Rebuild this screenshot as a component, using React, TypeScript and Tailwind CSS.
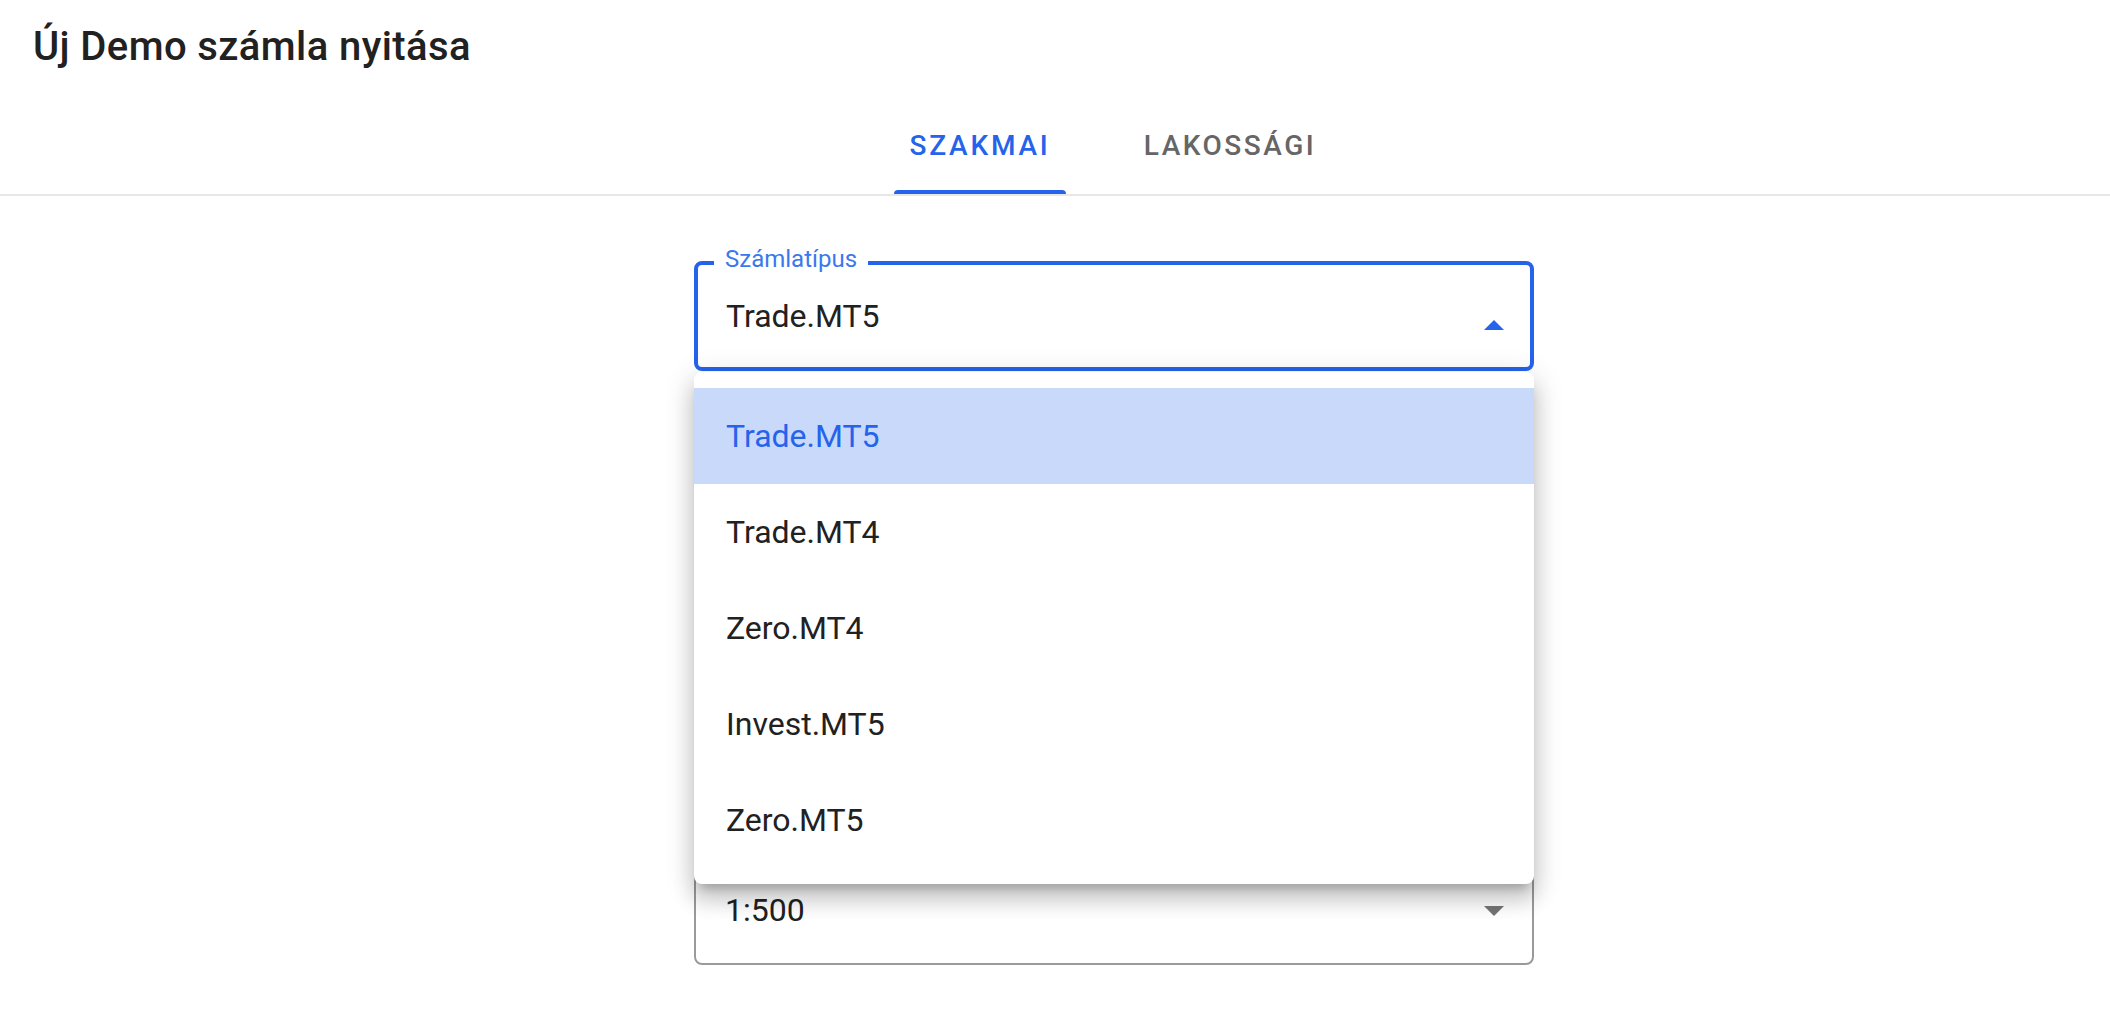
const options = ['Trade.MT5', 'Trade.MT4', 'Zero.MT4', 'Invest.MT5', 'Zero.MT5'];

function ArrowIcon({ up, className }: { up?: boolean; className: string }) {
  return (
    <svg viewBox="0 0 24 24" className={className} aria-hidden="true">
      <path d={up ? 'M7 14l5-5 5 5z' : 'M7 10l5 5 5-5z'} fill="currentColor" />
    </svg>
  );
}

export default function App() {
  const selected = 'Trade.MT5';

  return (
    <div className="min-h-screen bg-white font-['Roboto',_sans-serif] text-[#212121]">
      {/* header */}
      <div className="h-[98px] pl-[33px] pt-[15px]">
        <h1 className="text-[40px] leading-[64px] font-medium tracking-[0.01em]">Új Demo számla nyitása</h1>
      </div>

      {/* tabs */}
      <div className="flex justify-center border-b-2 border-[#e8e8e8] pl-[115px]">
        <div className="flex gap-[63px]">
          <button className="relative flex h-[96px] w-[172px] items-center justify-center text-[28px] font-medium uppercase tracking-[0.1em] text-[#2563eb]">
            Szakmai
            <span className="absolute bottom-0 left-0 h-[4px] w-full rounded-t-[4px] bg-[#2563eb]" />
          </button>
          <button className="flex h-[96px] w-[202px] items-center justify-center text-[28px] font-medium uppercase tracking-[0.09em] text-[#666666]">
            Lakossági
          </button>
        </div>
      </div>

      {/* form */}
      <div className="flex justify-center pl-[118px] pt-[65px]">
        <div className="relative w-[840px]">
          <div className="relative flex h-[110px] items-center rounded-[8px] border-[4px] border-[#2563eb] pl-[28px]">
            <span className="absolute -top-[18px] left-[16px] bg-white px-[11px] text-[24px] leading-[24px] text-[#3b78ee]">
              Számlatípus
            </span>
            <span className="text-[32px] leading-[38px]">{selected}</span>
            <ArrowIcon up className="absolute right-[12px] top-[37px] h-[48px] w-[48px] text-[#2563eb]" />
          </div>

          <div className="mt-[484px] relative flex h-[110px] items-center rounded-[8px] border-2 border-[#9a9a9a] pl-[29px]">
            <span className="text-[32px] leading-[38px]">1:500</span>
            <ArrowIcon className="absolute right-[14px] top-[29px] h-[48px] w-[48px] text-[#757575]" />
          </div>

          {/* open dropdown menu */}
          <ul className="absolute left-0 top-[111px] w-[840px] rounded-[8px] bg-white py-[16px] shadow-[0_10px_10px_-6px_rgba(0,0,0,0.2),0_16px_20px_2px_rgba(0,0,0,0.14),0_6px_28px_4px_rgba(0,0,0,0.12)]">
            {options.map((o) => (
              <li
                key={o}
                className={
                  o === selected
                    ? 'flex h-[96px] items-center bg-[#c9d9f9] pl-[32px] text-[32px] text-[#2563eb]'
                    : 'flex h-[96px] items-center pl-[32px] text-[32px] text-[#212121]'
                }
              >
                {o}
              </li>
            ))}
          </ul>
        </div>
      </div>
    </div>
  );
}
